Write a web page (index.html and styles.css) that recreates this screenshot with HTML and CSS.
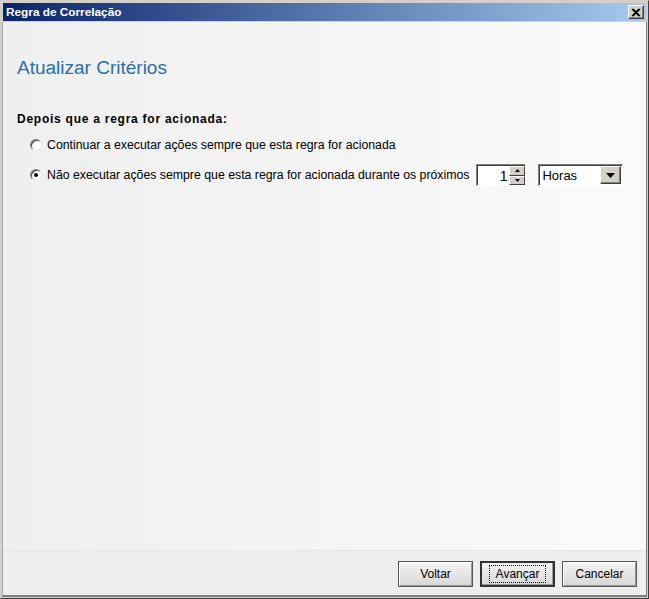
FILE: index.html
```html
<!DOCTYPE html>
<html>
<head>
<meta charset="utf-8">
<link rel="stylesheet" href="styles.css">
</head>
<body>
<div class="window">
  <div class="titlebar">
    <span class="title">Regra de Correlação</span>
    <div class="close"><svg width="10" height="9" viewBox="0 0 10 9"><path d="M1 1 L8 8 M2 1 L9 8 M8 1 L1 8 M9 1 L2 8" stroke="#000" stroke-width="1.3" fill="none"/></svg></div>
  </div>
  <div class="body">
    <div class="content">
      <h1 class="heading">Atualizar Critérios</h1>
      <div class="label">Depois que a regra for acionada:</div>
      <div class="option">
        <span class="radio"></span>
        <span class="opt-text">Continuar a executar ações sempre que esta regra for acionada</span>
      </div>
      <div class="option">
        <span class="radio checked"><span class="dot"></span></span>
        <span class="opt-text">Não executar ações sempre que esta regra for acionada durante os próximos</span>
        <div class="spinner">
          <div class="spin-value">1</div>
          <div class="spin-btns">
            <div class="spin-btn"><svg width="5" height="3" viewBox="0 0 5 3"><path d="M2.5 0 L5 3 L0 3Z" fill="#000"/></svg></div>
            <div class="spin-btn"><svg width="5" height="3" viewBox="0 0 5 3"><path d="M0 0 L5 0 L2.5 3Z" fill="#000"/></svg></div>
          </div>
        </div>
        <div class="select">
          <div class="select-value">Horas</div>
          <div class="select-btn"><svg width="9" height="5" viewBox="0 0 9 5"><path d="M0 0 L9 0 L4.5 5Z" fill="#000"/></svg></div>
        </div>
      </div>
    </div>
    <div class="footer">
      <button class="btn">Voltar</button>
      <button class="btn default"><span class="focus">Avançar</span></button>
      <button class="btn">Cancelar</button>
    </div>
  </div>
</div>
</body>
</html>
```
FILE: styles.css
```css
html, body { margin: 0; padding: 0; }
body { width: 649px; height: 599px; overflow: hidden; background: #d4d0c8; font-family: "Liberation Sans", Arial, sans-serif; }
.window {
  width: 649px; height: 599px; box-sizing: border-box;
  display: flex; flex-direction: column;
  border-left: 1px solid #d4d0c8;
  border-top: 1px solid #d4d0c8;
  border-right: 1px solid #404040;
  border-bottom: 1px solid #404040;
  background: #d4d0c8;
}
.titlebar {
  height: 18px; margin: 2px 2px 0 2px;
  background: linear-gradient(to right, #0a246a, #a6caf0);
  display: flex; align-items: center; justify-content: space-between;
  padding: 0 2px 0 3px;
}
.title { color: #fff; font-weight: bold; font-size: 11.8px; font-family: "Liberation Sans", Arial, sans-serif; }
.close {
  width: 16px; height: 14px; box-sizing: border-box; background: #d4d0c8;
  border-top: 1px solid #fff; border-left: 1px solid #fff;
  border-right: 1px solid #404040; border-bottom: 1px solid #404040;
  box-shadow: inset -1px -1px 0 #808080;
  display: flex; align-items: center; justify-content: center;
}
.body {
  flex: 1; display: flex; flex-direction: column;
  margin: 1px 1px 1px 1px;
  border-left: 1px solid #a8a8a8; border-right: 1px solid #808080; border-bottom: 2px solid #808080;
}
.content {
  flex: 1;
  background: linear-gradient(to right, #efefef, #fafafa);
  padding: 1px 0 0 14px;
}
.heading {
  margin: 33px 0 0 0; font-weight: normal; font-size: 19px; color: #2c6ea8; line-height: 24px;
  font-family: "Liberation Sans", Arial, sans-serif;
}
.label {
  margin-top: 32px; font-weight: bold; font-size: 12px; letter-spacing: 0.75px; color: #000; line-height: 14px;
}
.option {
  display: flex; align-items: center; margin-left: 13px; height: 22px; margin-top: 8px;
  font-size: 12.3px; color: #000;
}
.option + .option { margin-top: 8px; }
.radio {
  width: 12px; height: 12px; border-radius: 50%; box-sizing: border-box;
  border: 1px solid #808080; border-right-color: #e8e8e8; border-bottom-color: #e8e8e8;
  background: #fff; box-shadow: inset 1px 1px 0 #404040;
  display: flex; align-items: center; justify-content: center; margin-right: 5px;
}
.dot { width: 4px; height: 4px; border-radius: 50%; background: #000; }
.opt-text { white-space: nowrap; }
.spinner {
  margin-left: 7px; width: 50px; height: 22px; box-sizing: border-box; display: flex;
  border-top: 1px solid #808080; border-left: 1px solid #808080;
  border-right: 1px solid #fff; border-bottom: 1px solid #fff;
  box-shadow: inset 1px 1px 0 #404040;
  background: #fff;
}
.spin-value { flex: 1; text-align: right; font-size: 14px; line-height: 20px; padding-right: 2px; padding-top: 1px; }
.spin-btns { width: 16px; display: flex; flex-direction: column; padding: 1px 0 0 0; }
.spin-btn {
  flex: 1; box-sizing: border-box; background: #d4d0c8;
  border-top: 1px solid #fff; border-left: 1px solid #fff;
  border-right: 1px solid #404040; border-bottom: 1px solid #404040;
  display: flex; align-items: center; justify-content: center;
}
.select {
  margin-left: 12px; width: 85px; height: 22px; box-sizing: border-box; display: flex;
  border-top: 1px solid #808080; border-left: 1px solid #808080;
  border-right: 1px solid #fff; border-bottom: 1px solid #fff;
  box-shadow: inset 1px 1px 0 #404040;
  background: #fff; padding: 1px 1px 1px 1px;
}
.select-value { flex: 1; font-size: 13px; line-height: 19px; padding-left: 2px; }
.select-btn {
  width: 21px; box-sizing: border-box; background: #d4d0c8;
  border-top: 1px solid #fff; border-left: 1px solid #fff;
  border-right: 1px solid #404040; border-bottom: 1px solid #404040;
  box-shadow: inset -1px -1px 0 #808080;
  display: flex; align-items: center; justify-content: center;
}
.footer {
  height: 45px; box-sizing: border-box; background: #eeeeee; border-top: 1px solid #e4e4e4;
  display: flex; justify-content: flex-end; align-items: flex-start;
  padding: 10px 9px 0 0; gap: 7px;
}
.btn {
  width: 75px; height: 26px; box-sizing: border-box; margin: 0; padding: 0;
  font-family: "Liberation Sans", Arial, sans-serif; font-size: 12px; color: #000;
  background: linear-gradient(to bottom, #f4f4f4, #d8d8d8);
  border: 1px solid #555; box-shadow: inset 1px 1px 0 #fff, inset -1px -1px 0 #999;
  display: flex; align-items: center; justify-content: center;
}
.btn.default { border: 2px solid #333; box-shadow: inset -1px -1px 0 #999; }
.focus { border: 1px dotted #000; padding: 2px 4px; width: 57px; box-sizing: border-box; height: 18px; line-height: 13px; }
```
